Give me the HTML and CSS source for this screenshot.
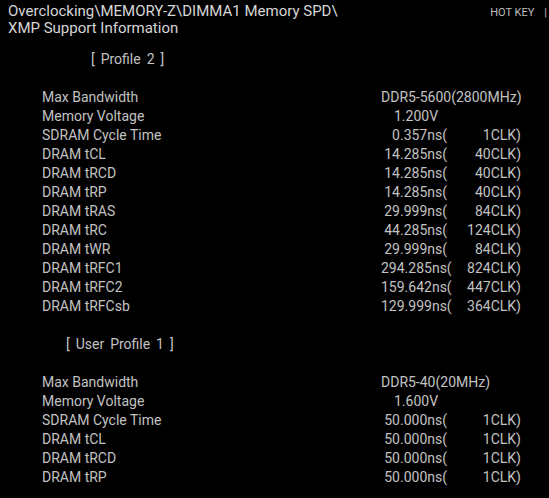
FILE: index.html
```html
<!DOCTYPE html>
<html lang="en">
<head>
  <meta charset="UTF-8" />
  <title>XMP Support Information</title>
  <link rel="stylesheet" href="styles.css">
</head>
<body>
  <!-- Top bar with path and hot key -->
  <header class="top-bar">
    <div class="path">
      Overclocking\MEMORY-Z\DIMMA1 Memory SPD\<br />XMP Support Information
    </div>
    <div class="hot-key">HOT KEY<span class="bar">|</span></div>
  </header>

  <!-- SPD lines -->
  <main class="spd">
    <div class="heading heading-xmp">[ Profile 2 ]</div>
    <div class="blank"></div>
    <div class="row"><span class="label">Max Bandwidth</span><span class="value">DDR5-5600(2800MHz)</span></div>
    <div class="row"><span class="label">Memory Voltage</span><span class="value volt">1.200V</span></div>
    <div class="row"><span class="label">SDRAM Cycle Time</span><span class="value"><span class="ns">0.357ns(</span><span class="clk">1CLK)</span></span></div>
    <div class="row"><span class="label">DRAM tCL</span><span class="value"><span class="ns">14.285ns(</span><span class="clk">40CLK)</span></span></div>
    <div class="row"><span class="label">DRAM tRCD</span><span class="value"><span class="ns">14.285ns(</span><span class="clk">40CLK)</span></span></div>
    <div class="row"><span class="label">DRAM tRP</span><span class="value"><span class="ns">14.285ns(</span><span class="clk">40CLK)</span></span></div>
    <div class="row"><span class="label">DRAM tRAS</span><span class="value"><span class="ns">29.999ns(</span><span class="clk">84CLK)</span></span></div>
    <div class="row"><span class="label">DRAM tRC</span><span class="value"><span class="ns">44.285ns(</span><span class="clk">124CLK)</span></span></div>
    <div class="row"><span class="label">DRAM tWR</span><span class="value"><span class="ns">29.999ns(</span><span class="clk">84CLK)</span></span></div>
    <div class="row"><span class="label">DRAM tRFC1</span><span class="value"><span class="ns">294.285ns(</span><span class="clk">824CLK)</span></span></div>
    <div class="row"><span class="label">DRAM tRFC2</span><span class="value"><span class="ns">159.642ns(</span><span class="clk">447CLK)</span></span></div>
    <div class="row"><span class="label">DRAM tRFCsb</span><span class="value"><span class="ns">129.999ns(</span><span class="clk">364CLK)</span></span></div>
    <div class="blank"></div>
    <div class="heading heading-user">[ User Profile 1 ]</div>
    <div class="blank"></div>
    <div class="row"><span class="label">Max Bandwidth</span><span class="value">DDR5-40(20MHz)</span></div>
    <div class="row"><span class="label">Memory Voltage</span><span class="value volt">1.600V</span></div>
    <div class="row"><span class="label">SDRAM Cycle Time</span><span class="value"><span class="ns">50.000ns(</span><span class="clk">1CLK)</span></span></div>
    <div class="row"><span class="label">DRAM tCL</span><span class="value"><span class="ns">50.000ns(</span><span class="clk">1CLK)</span></span></div>
    <div class="row"><span class="label">DRAM tRCD</span><span class="value"><span class="ns">50.000ns(</span><span class="clk">1CLK)</span></span></div>
    <div class="row"><span class="label">DRAM tRP</span><span class="value"><span class="ns">50.000ns(</span><span class="clk">1CLK)</span></span></div>
  </main>
</body>
</html>
```

FILE: styles.css
```css
html, body {
  height: 100%;
}

body {
  margin: 0;
  background: #000;
  color: #c2c2c2;
  font-family: Roboto, "Liberation Sans", sans-serif;
  overflow: hidden;
}

.top-bar {
  display: flex;
  justify-content: space-between;
  align-items: flex-start;
  padding: 3px 0 0 8px;
}

.path {
  font-size: 15px;
  line-height: 17px;
  color: #d6d6d6;
}

.hot-key {
  font-size: 11px;
  line-height: 17px;
  color: #bdbdbd;
  padding: 1px 2px 0 0;
  white-space: nowrap;
}

.hot-key .bar {
  margin-left: 10px;
}

.spd {
  margin-top: 13px;
  font-size: 14px;
  line-height: 19px;
}

.blank {
  height: 19px;
}

.heading {
  word-spacing: 2.5px;
}

.heading-xmp { padding-left: 91px; }
.heading-user { padding-left: 66px; }

.row {
  display: grid;
  grid-template-columns: 339px auto;
  padding-left: 42px;
  white-space: nowrap;
}

.value.volt {
  padding-left: 13px;
}

.ns {
  display: inline-block;
  width: 66px;
  text-align: right;
}

.clk {
  display: inline-block;
  width: 74px;
  text-align: right;
}
```
